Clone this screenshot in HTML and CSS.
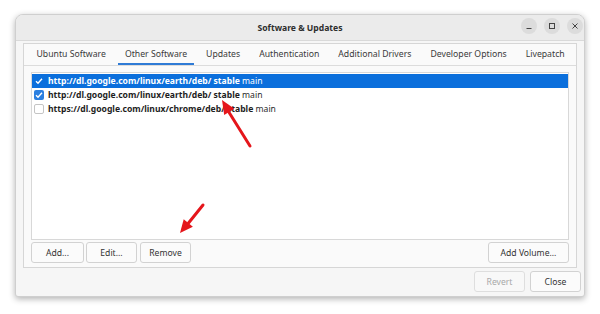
FILE: index.html
```html
<!DOCTYPE html>
<html lang="en">
<head>
    <meta charset="UTF-8">
    <meta name="viewport" content="width=device-width, initial-scale=1.0">
    <title>Software &amp; Updates</title>
    <link rel="stylesheet" href="styles.css">
</head>
<body>
    <div class="window">
        <div class="titlebar">
            <span class="title">Software &amp; Updates</span>
            <div class="controls">
                <span class="ctl">
                    <svg width="8" height="8" viewBox="0 0 8 8"><path d="M1.5 6.5h5" stroke="#444" stroke-width="1"/></svg>
                </span>
                <span class="ctl">
                    <svg width="8" height="8" viewBox="0 0 8 8"><rect x="1.5" y="1.5" width="5" height="5" fill="none" stroke="#444" stroke-width="1"/></svg>
                </span>
                <span class="ctl">
                    <svg width="8" height="8" viewBox="0 0 8 8"><path d="M1.5 1.5l5 5M6.5 1.5l-5 5" stroke="#444" stroke-width="1"/></svg>
                </span>
            </div>
        </div>

        <div class="content">
            <div class="notebook">
                <div class="tabs">
                    <span class="tab">Ubuntu Software</span>
                    <span class="tab active">Other Software</span>
                    <span class="tab">Updates</span>
                    <span class="tab">Authentication</span>
                    <span class="tab">Additional Drivers</span>
                    <span class="tab">Developer Options</span>
                    <span class="tab">Livepatch</span>
                </div>

                <div class="panel">
                    <div class="source-list">
                        <div class="row selected">
                            <span class="check plain">
                                <svg width="10" height="10" viewBox="0 0 10 10"><path d="M2 5.2l2 2 4-4.4" fill="none" stroke="#fff" stroke-width="1.4"/></svg>
                            </span>
                            <span class="src"><b>http://dl.google.com/linux/earth/deb/ stable</b> main</span>
                        </div>
                        <div class="row">
                            <span class="check on">
                                <svg width="10" height="10" viewBox="0 0 10 10"><path d="M2 5.2l2 2 4-4.4" fill="none" stroke="#fff" stroke-width="1.4"/></svg>
                            </span>
                            <span class="src"><b>http://dl.google.com/linux/earth/deb/ stable</b> main</span>
                        </div>
                        <div class="row">
                            <span class="check off"></span>
                            <span class="src"><b>https://dl.google.com/linux/chrome/deb/ stable</b> main</span>
                        </div>
                    </div>

                    <div class="list-actions">
                        <button class="btn btn-add">Add...</button>
                        <button class="btn">Edit...</button>
                        <button class="btn btn-remove">Remove</button>
                        <span class="spacer"></span>
                        <button class="btn btn-volume">Add Volume...</button>
                    </div>
                </div>
            </div>

            <div class="footer">
                <button class="btn" disabled>Revert</button>
                <button class="btn">Close</button>
            </div>
        </div>
    </div>

    <!-- annotation arrows drawn over the screenshot -->
    <svg class="annotations" width="600" height="314" viewBox="0 0 600 314">
        <line x1="250" y1="146" x2="228.5" y2="111.5" stroke="#e5161b" stroke-width="3" stroke-linecap="round"/>
        <polygon points="222,100 234.4,108.8 224.2,115.1" fill="#e5161b"/>
        <line x1="203" y1="205" x2="188.5" y2="223" stroke="#e5161b" stroke-width="3" stroke-linecap="round"/>
        <polygon points="180,233 192.9,226.8 183.7,219.2" fill="#e5161b"/>
    </svg>
</body>
</html>
```

FILE: styles.css
```css
body {
    margin: 0;
    width: 600px;
    height: 314px;
    background: #fff;
    font-family: "Noto Sans", "Open Sans", sans-serif;
    font-size: 9px;
    color: #333;
    position: relative;
    overflow: hidden;
}
.window {
    margin: 14px 0 0 15px;
    width: 568px;
    height: 281px;
    border: 1px solid #cfcfcf;
    border-radius: 8px 8px 3px 3px;
    background: #f6f6f6;
    box-shadow: 0 2px 6px rgba(0, 0, 0, 0.3);
    overflow: hidden;
    display: flex;
    flex-direction: column;
}
.titlebar {
    height: 25px;
    flex: none;
    background: #ebebeb;
    border-bottom: 1px solid #d9d9d9;
    display: flex;
    align-items: center;
    justify-content: center;
    position: relative;
}
.title {
    font-weight: bold;
    font-size: 8.6px;
    color: #2e2e2e;
}
.controls {
    position: absolute;
    right: 1px;
    top: 3px;
    display: flex;
    gap: 7px;
}
.ctl {
    width: 16px;
    height: 16px;
    border-radius: 50%;
    background: #dcdcdc;
    display: flex;
    align-items: center;
    justify-content: center;
}
.content {
    flex: 1;
    padding: 2px 3px 0 7px;
    display: flex;
    flex-direction: column;
}
.notebook {
    width: 552px;
    height: 223px;
    border: 1px solid #d6d6d6;
    background: #fafafa;
    display: flex;
    flex-direction: column;
}
.tabs {
    height: 21px;
    flex: none;
    display: flex;
    padding-left: 3px;
    border-bottom: 1px solid #dcdcdc;
}
.tab {
    flex: none;
    white-space: nowrap;
    margin: 0 2.5px;
    padding: 0 7px;
    display: flex;
    align-items: center;
    border-bottom: 2px solid transparent;
    padding-top: 1px;
    font-size: 8.7px;
    color: #3a3a3a;
}
.tab.active {
    border-bottom-color: #2f7bd6;
}
.panel {
    flex: 1;
    padding: 6px 7px 6px 7px;
    display: flex;
    flex-direction: column;
}
.source-list {
    height: 164px;
    border: 1px solid #d8d8d8;
    background: #fff;
    padding: 1px 0;
}
.row {
    height: 14px;
    display: flex;
    align-items: center;
    padding-left: 2px;
    font-size: 8.6px;
    color: #2a2a2a;
    white-space: nowrap;
}
.row b {
    color: #1e1e1e;
}
.row.selected {
    background: #0b6fdc;
    color: #fff;
}
.row.selected b {
    color: #fff;
}
.check {
    width: 10px;
    height: 10px;
    margin-right: 4px;
    box-sizing: border-box;
    border-radius: 2px;
    display: flex;
    align-items: center;
    justify-content: center;
    flex: none;
}
.check.on {
    background: #2b7fe0;
}
.check.off {
    border: 1px solid #c4c4c4;
    background: #fff;
}
.list-actions {
    margin-top: 2px;
    display: flex;
    gap: 2px;
}
.spacer {
    flex: 1;
}
.btn {
    height: 21px;
    width: 51px;
    padding: 0;
    border: 1px solid #d2d2d2;
    border-radius: 3px;
    background: #fbfbfb;
    font-family: inherit;
    font-size: 8.6px;
    color: #333;
}
.btn-add {
    width: 53px;
}
.btn-remove {
    margin-left: 1px;
}
.btn-volume {
    width: 81px;
}
.btn:disabled {
    color: #a8a8a8;
    background: #f8f8f8;
    border-color: #dedede;
}
.footer {
    flex: 1;
    display: flex;
    justify-content: flex-end;
    align-items: flex-start;
    gap: 5px;
    padding-top: 3px;
}
.annotations {
    position: absolute;
    left: 0;
    top: 0;
    pointer-events: none;
}
```
